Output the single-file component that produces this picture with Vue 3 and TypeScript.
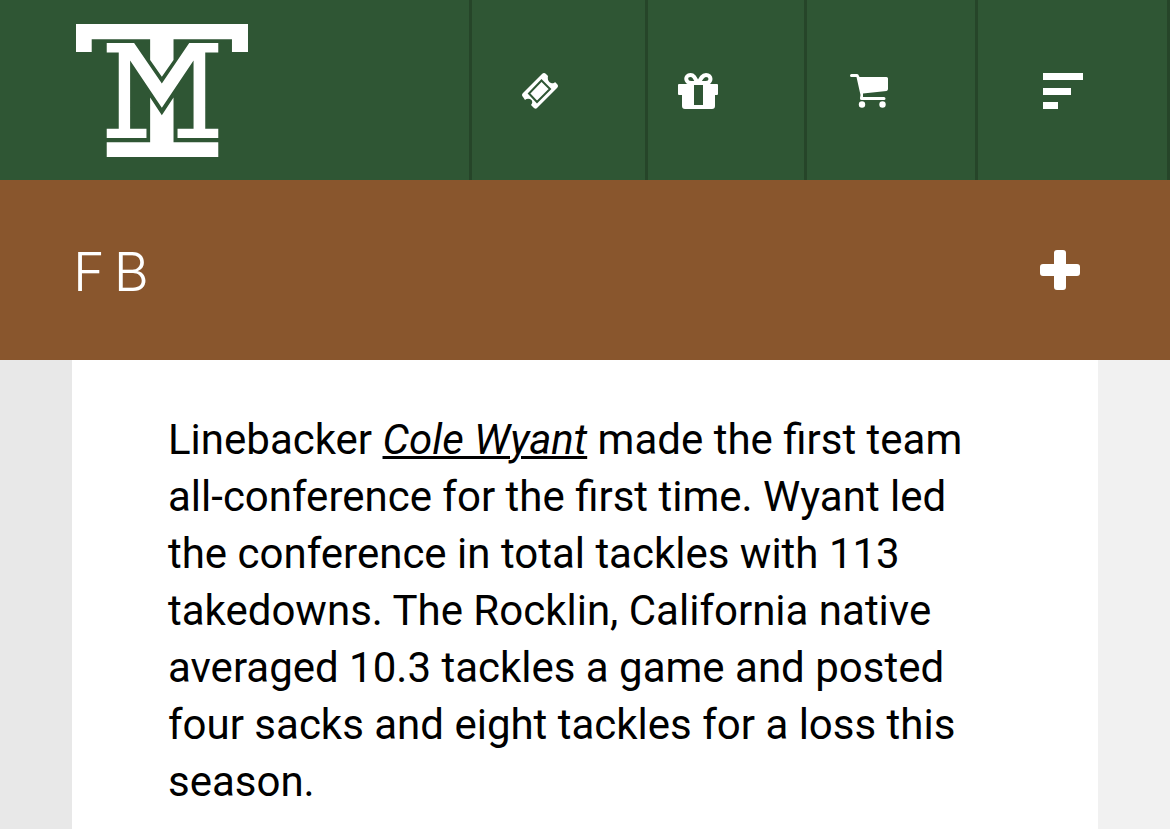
<script setup lang="ts">
import { ref } from 'vue'

const menuOpen = ref(false)
const sectionOpen = ref(false)
</script>

<template>
  <div class="page">
    <header class="topbar">
      <a class="brand" href="#" aria-label="Home">
        <svg class="logo" viewBox="49 42 515 399" aria-hidden="true">
          <path d="M49 42H564V126H516V88H341V150L306 200L271 150V88H96V126H49Z" />
          <path d="M141 99H223L306 220L388 99H475V127H436V356H475V383H353V356H401V151L306 293L211 151V356H260V383H141V356H177V127H141Z" />
          <path d="M271 262L306 315L341 262V396H475V440H141V396H271Z" />
        </svg>
      </a>
      <nav class="actions" aria-label="Main">
        <a class="action tickets" href="#" aria-label="Tickets">
          <svg width="36" height="36" viewBox="0 0 36 36" aria-hidden="true">
            <path d="M20 1Q22-1 24 1L26 3Q25 8 29 10Q32 11 33 9L35 11Q37 13 35 15L16 34Q14 37 12 35L9 32Q12 28 8 26Q5 25 3 27L1 24Q-1 22 1 20Z" />
            <path class="cut" d="M19.500 7.500L28 16L15 29L7 20.500Z" />
          </svg>
        </a>
        <a class="action gifts" href="#" aria-label="Gifts">
          <svg width="40" height="36" viewBox="0 0 40 36" aria-hidden="true">
            <path fill-rule="evenodd" d="M1 11H39Q40 11 40 12V21Q40 22 39 22H37V33Q37 36 34 36H7Q4 36 4 33V22H1Q0 22 0 21V12Q0 11 1 11ZM16 12V32H25V12Z" />
            <path class="ribbon" d="M20 11C17 5 16 2 12.500 2C6.500 2 7 10 13 10H28C34 10 34 2 28 2C24.500 2 23 5 20.500 10" />
          </svg>
        </a>
        <a class="action store" href="#" aria-label="Store">
          <svg width="38" height="36" viewBox="0 0 38 36" aria-hidden="true">
            <path d="M1.500 1H7Q8.500 1 9 3L9.500 4H36.500Q38 4 38 5.500V16Q38 17.500 36.500 18L13 20.500V24H34Q35.500 24 35.500 25.500Q35.500 27 34 27H11.500Q9.500 27 10 25L10.500 22L6.500 4H1.500Q0 4 0 2.500Q0 1 1.500 1Z" />
            <circle cx="12" cy="31.500" r="3.200" />
            <circle cx="32.500" cy="31.500" r="3.200" />
          </svg>
        </a>
        <button class="action menu" type="button" aria-label="Menu" :aria-expanded="menuOpen" @click="menuOpen = !menuOpen">
          <svg width="40" height="36" viewBox="0 0 40 36" aria-hidden="true">
            <path d="M0 0H40V7H0ZM0 15H28V22H0ZM0 29H15V36H0Z" />
          </svg>
        </button>
      </nav>
    </header>

    <div class="section-bar">
      <h1>FB</h1>
      <button class="expand" type="button" aria-label="Show section links" :aria-expanded="sectionOpen" @click="sectionOpen = !sectionOpen">
        <svg width="40" height="40" viewBox="0 0 40 40" aria-hidden="true">
          <path d="M17 0H23Q26 0 26 3V14H37Q40 14 40 17V23Q40 26 37 26H26V37Q26 40 23 40H17Q14 40 14 37V26H3Q0 26 0 23V17Q0 14 3 14H14V3Q14 0 17 0Z" />
        </svg>
      </button>
    </div>

    <main class="article">
      <p>
        Linebacker <a href="#">Cole Wyant</a> made the first team all-conference for the first time. Wyant led the
        conference in total tackles with 113 takedowns. The Rocklin, California native averaged 10.3 tackles a game and
        posted four sacks and eight tackles for a loss this season.
      </p>
    </main>
  </div>
</template>

<style>
body {
  margin: 0;
}
</style>

<style scoped>
.page {
  display: flex;
  flex-direction: column;
  min-height: 100vh;
  background: linear-gradient(90deg, #e8e8e8 10%, #f1f1f1 90%);
  font-family: Roboto, "Liberation Sans", sans-serif;
}

.topbar {
  display: flex;
  justify-content: space-between;
  height: 180px;
  background: #2f5634;
}

.brand {
  padding: 24px 0 0 76px;
}

.logo {
  display: block;
  width: 172px;
  fill: #fff;
}

.actions {
  display: flex;
  border-right: 3px solid #264529;
}

.action {
  box-sizing: border-box;
  display: flex;
  align-items: center;
  justify-content: flex-end;
  padding: 2px 84px 0 0;
  border: 0;
  border-left: 3px solid #264529;
  background: none;
}

.action svg {
  fill: #fff;
}

.tickets {
  width: 176px;
}

.gifts {
  width: 159px;
}

.store {
  width: 171px;
}

.menu {
  width: 192px;
}

.tickets,
.store {
  padding-right: 87px;
}

.gifts {
  padding-right: 86px;
}

.action .cut {
  fill: none;
  stroke: #2f5634;
  stroke-width: 2;
}

.action .ribbon {
  fill: none;
  stroke: #fff;
  stroke-width: 4;
}

.section-bar {
  display: flex;
  align-items: center;
  justify-content: space-between;
  box-sizing: border-box;
  height: 180px;
  padding: 0 90px 0 73px;
  background: #89562d;
  color: #fff;
}

h1 {
  margin: 0;
  padding-top: 2px;
  font-family: Inter, "Open Sans", sans-serif;
  font-size: 54px;
  font-weight: 300;
  letter-spacing: 9px;
}

.expand {
  display: flex;
  padding: 0;
  border: 0;
  background: none;
}

.expand svg {
  fill: #fff;
}

.article {
  flex: 1;
  margin: 0 72px;
  padding: 51px 96px 0;
  background: #fff;
}

p {
  margin: 0;
  color: #000;
  font-size: 42px;
  line-height: 57px;
}

p a {
  color: inherit;
  font-style: italic;
  text-decoration: underline;
  text-decoration-thickness: 3px;
}
</style>
